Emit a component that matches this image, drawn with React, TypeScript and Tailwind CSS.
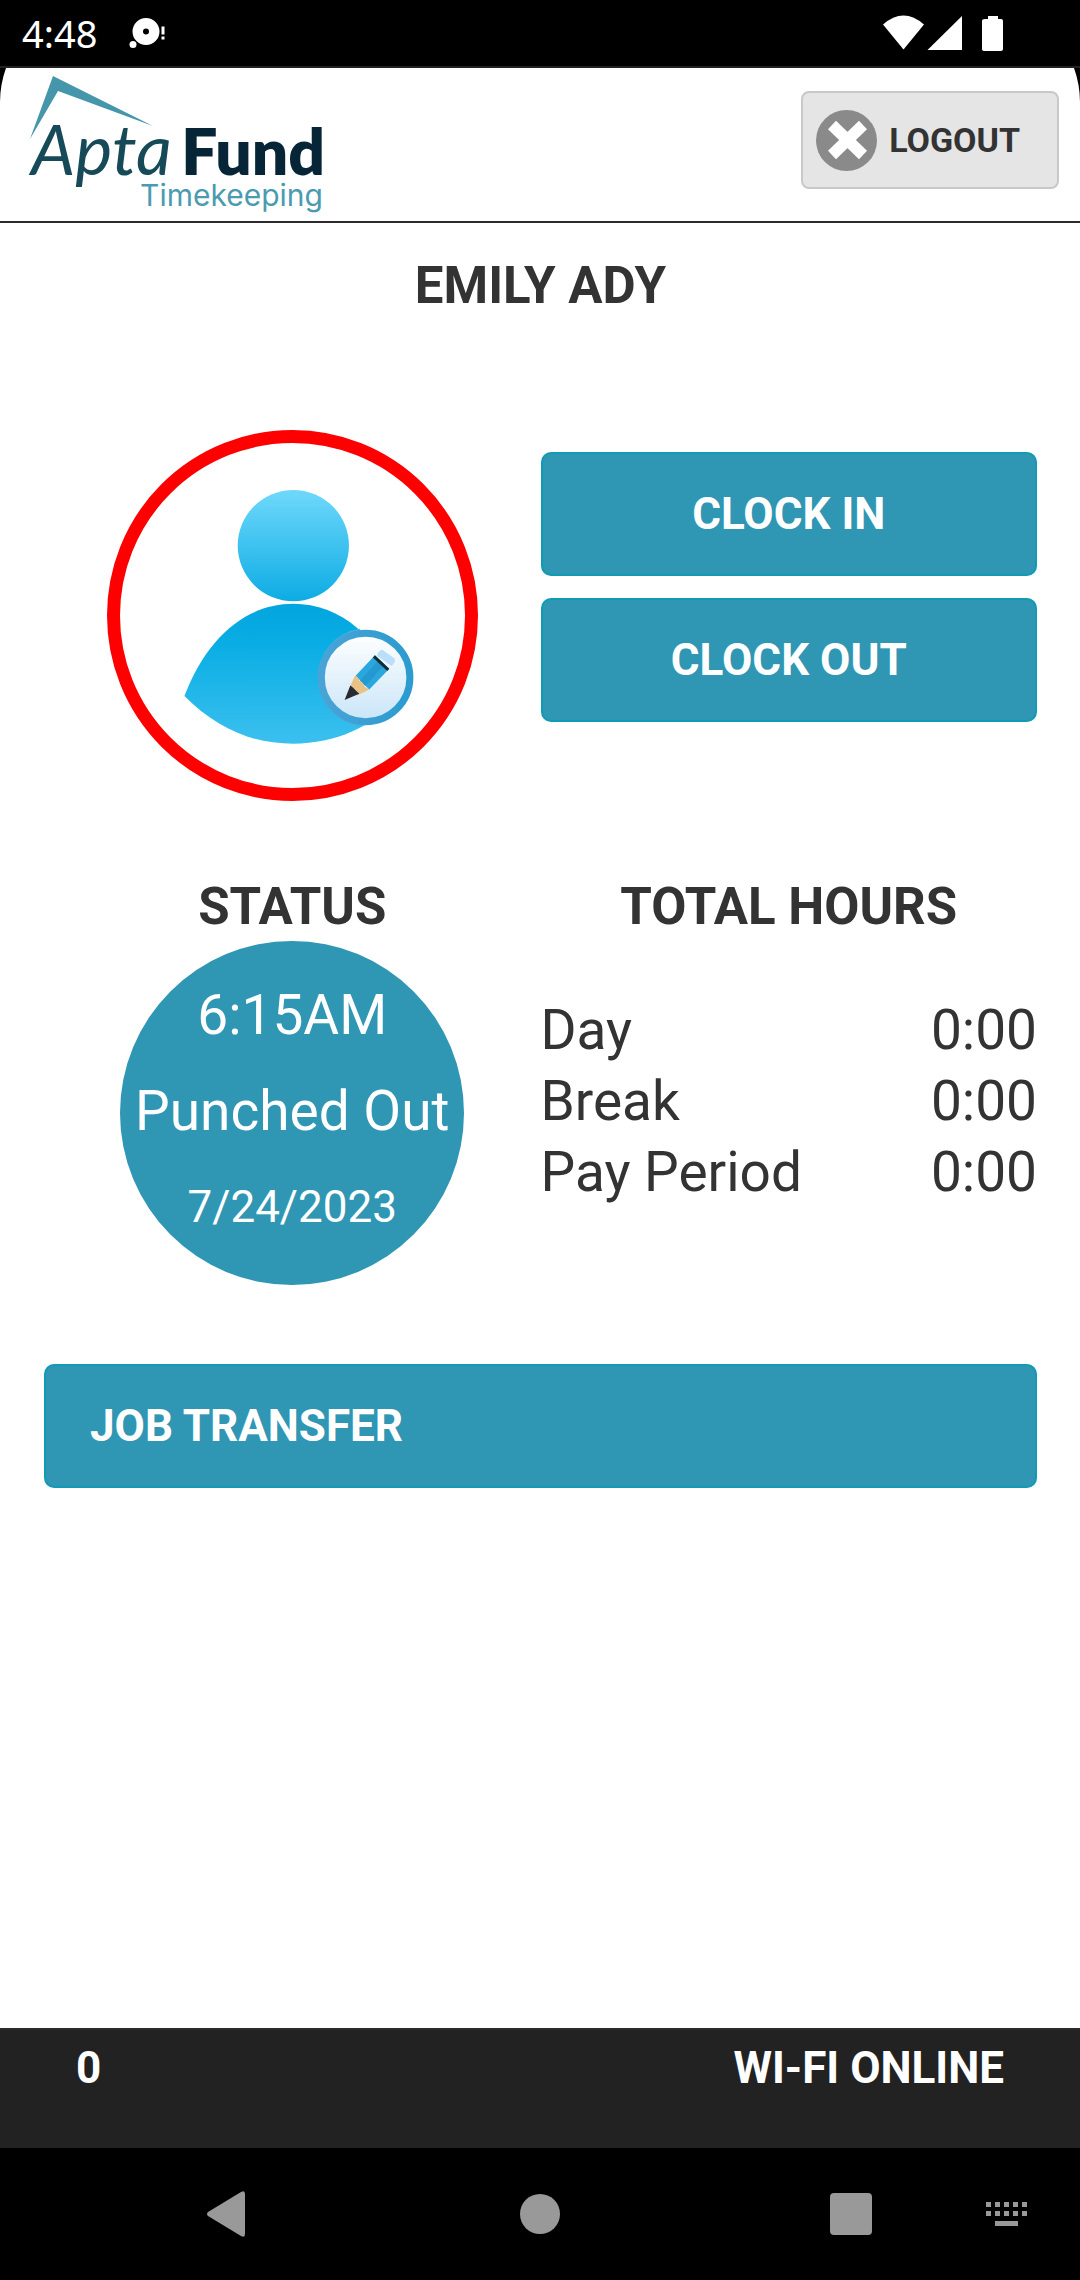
import type { ReactNode } from 'react';

// Constants
const HOURS = [
  { label: 'Day', value: '0:00' },
  { label: 'Break', value: '0:00' },
  { label: 'Pay Period', value: '0:00' },
];

const KEY_COLUMNS = [0, 9, 18, 27, 36];

const StatusBar = () => (
  <div className="flex h-[68px] items-center justify-between border-b-2 border-[#222222] bg-black pl-[22px] pr-[77px] text-white">
    <div className="flex items-center gap-8">
      <time className="font-['Noto_Sans',sans-serif] text-[38px] leading-[60px]">4:48</time>
      <svg className="h-[32px] w-[38px]" viewBox="0 0 38 32" fill="currentColor" aria-hidden="true">
        <path
          fillRule="evenodd"
          d="M17 1a13.500 13.500 0 1 0 0 27a13.500 13.500 0 1 0 0-27zM17 11.500a3 3 0 1 1 0 6a3 3 0 1 1 0-6z"
        />
        <circle cx="4" cy="27.500" r="3.500" />
        <path d="M32.500 9.500h3v8h-3zM32.500 19.500h3v3h-3z" />
      </svg>
    </div>
    <svg className="h-[38px] w-[120px]" viewBox="0 0 120 38" fill="currentColor" aria-hidden="true">
      <path d="M0 10.500Q20.500-7.500 41 10.500L20.500 35.500z" />
      <path d="M79 2V36H44.500z" />
      <path d="M105 2h10v3h3q2 0 2 2v28q0 2-2 2h-16q-3 0-3-2V7q0-2 3-2h3z" />
    </svg>
  </div>
);

const Logo = () => (
  <svg className="h-[153px] w-[330px]" viewBox="0 0 330 153" role="img" aria-label="AptaFund Timekeeping">
    <path d="M30 71L53 8L153 58L58 23z" fill="#4596aa" />
    <text x="31" y="107" fill="#174a58" className="font-['Lato',sans-serif] text-[70px] italic">
      Apta
    </text>
    <text
      x="325"
      y="107"
      textAnchor="end"
      fill="#062536"
      className="font-['Lato',sans-serif] text-[64px] font-extrabold"
    >
      Fund
    </text>
    <text x="323" y="138" textAnchor="end" fill="#4b9bb0" className="font-['Inter',sans-serif] text-[30px]">
      Timekeeping
    </text>
  </svg>
);

const Header = () => (
  <header className="relative flex items-start justify-between border-b-2 border-[#2b2b2b] pr-[21px]">
    <Logo />
    <button
      type="button"
      className="mt-[23px] flex h-[98px] items-center gap-3 rounded-lg border-2 border-[#c8c8c8] bg-[#e5e5e5] pl-[13px] pr-[37px] text-[34px] font-bold text-[#333333]"
    >
      <svg className="h-[61px] w-[61px]" viewBox="0 0 61 61" aria-hidden="true">
        <circle cx="30.500" cy="30.500" r="30.500" fill="#8a8a8a" />
        <path d="M16 15L47 45M47 15L16 45" stroke="#ffffff" strokeWidth="11.500" />
      </svg>
      LOGOUT
    </button>

    {/* Rounded display corners */}
    <svg className="absolute left-0 top-0 h-[34px] w-[6px]" viewBox="0 0 6 34" aria-hidden="true">
      <path d="M0 0H6A102 102 0 0 0 0 34z" />
    </svg>
    <svg className="absolute right-0 top-0 h-[34px] w-[6px]" viewBox="0 0 6 34" aria-hidden="true">
      <path d="M6 0H0A102 102 0 0 1 6 34z" />
    </svg>
  </header>
);

const ProfilePicture = () => (
  <button
    type="button"
    aria-label="Edit profile picture"
    className="h-[371px] w-[371px] rounded-full border-[13px] border-[#ff0000]"
  >
    <svg className="h-full w-full" viewBox="90 98 1035 1036" aria-hidden="true">
      <defs>
        <linearGradient id="head" x1="0" y1="0" x2="0" y2="1">
          <stop offset="0" stopColor="#6fd8fb" />
          <stop offset="1" stopColor="#0dace4" />
        </linearGradient>
        <linearGradient id="body" x1="0" y1="0" x2="0" y2="1">
          <stop offset="0" stopColor="#02a5df" />
          <stop offset="0.3" stopColor="#0aaee4" />
          <stop offset="1" stopColor="#3bc0ef" />
        </linearGradient>
        <linearGradient id="badge" x1="0" y1="0" x2="0" y2="1">
          <stop offset="0" stopColor="#ffffff" />
          <stop offset="1" stopColor="#c9e5f8" />
        </linearGradient>
        <linearGradient id="ring" x1="0" y1="0" x2="1" y2="0">
          <stop offset="0" stopColor="#4aa3d6" />
          <stop offset="1" stopColor="#2b9bd0" />
        </linearGradient>
      </defs>
      <circle cx="610" cy="406" r="167" fill="url(#head)" />
      <path
        d="M283 858C350 680 470 581 610 581C750 581 870 680 937 858C850 950 735 1001 610 1001C485 1001 380 955 283 858z"
        fill="url(#body)"
      />
      <path d="M810 656A148 148 0 0 0 810 949z" fill="#45b3e5" />
      <circle cx="827" cy="802" r="133" fill="url(#badge)" stroke="url(#ring)" strokeWidth="21" />
      <path d="M876 718L915 746Q917 758 905 768L861 737Q864 724 876 718z" fill="#b9dffb" />
      <path d="M855 735L898 776L838 838L797 797z" fill="#2aa7dc" />
      <path d="M868 748L884 763L826 828L810 812z" fill="#2399cf" />
      <path d="M855 735L898 776L892 783L849 742z" fill="#102c35" />
      <path d="M795 797Q805 800 808 812Q820 815 824 830L838 838L802 856L780 830z" fill="#e8c287" />
      <path d="M781 826Q790 832 796 840L808 851L764 870z" fill="#2a2a32" />
    </svg>
  </button>
);

const PrimaryButton = ({ children, align }: { children: ReactNode; align: 'left' | 'center' }) => (
  <button
    type="button"
    className={`h-[124px] w-full rounded-[10px] border-2 border-[#109ab3] bg-[#2f96b4] px-11 text-[44px] font-bold text-white ${
      align === 'left' ? 'text-left' : 'text-center'
    }`}
  >
    {children}
  </button>
);

const PunchStatus = () => (
  <section className="flex flex-col items-center gap-1">
    <h2 className="text-[51px] font-bold leading-[60px]">STATUS</h2>
    <div className="h-[344px] w-[344px] rounded-full bg-[#2f96b4] pt-[26px] text-center text-[55px] leading-[96px] text-white">
      <p>6:15AM</p>
      <p>Punched Out</p>
      <p className="text-[44px]">7/24/2023</p>
    </div>
  </section>
);

const TotalHours = () => (
  <section>
    <h2 className="text-center text-[51px] font-bold leading-[60px]">TOTAL HOURS</h2>
    <table className="mt-[58px] w-full text-[55px] leading-[71px]">
      <tbody>
        {HOURS.map(({ label, value }) => (
          <tr key={label}>
            <th scope="row" className="p-0 text-left font-normal">
              {label}
            </th>
            <td className="p-0 text-right">{value}</td>
          </tr>
        ))}
      </tbody>
    </table>
  </section>
);

const NavigationBar = () => (
  <nav className="grid h-[132px] grid-cols-[172fr_456fr_166fr_146fr] place-items-center bg-black pl-[140px] text-[#999999]">
    <button type="button" aria-label="Back">
      <svg className="h-[46px] w-[38px]" viewBox="0 0 38 46" fill="currentColor">
        <path d="M1 21L34 1Q38-1 38 3V43Q38 47 34 45L1 25Q-1 23 1 21z" />
      </svg>
    </button>
    <button type="button" aria-label="Home" className="h-10 w-10 rounded-full bg-[#999999]" />
    <button type="button" aria-label="Recent apps" className="h-[42px] w-[42px] rounded bg-[#999999]" />
    <button type="button" aria-label="Switch keyboard">
      <svg className="h-[24px] w-[42px]" viewBox="0 0 42 24" fill="currentColor">
        {KEY_COLUMNS.map((x) => (
          <path key={x} d={`M${x} 0h5v5h-5zM${x} 9h5v5h-5z`} />
        ))}
        <path d="M9 19h23v5H9z" />
      </svg>
    </button>
  </nav>
);

export default function App() {
  return (
    <div className="flex min-h-screen flex-col bg-white font-['Roboto',sans-serif] text-[#333333]">
      <StatusBar />
      <Header />
      <main className="flex-1 pl-11 pr-[43px] pt-[33px]">
        <h1 className="text-center text-[51px] font-bold leading-[60px]">EMILY ADY</h1>
        <div className="mt-[114px] grid grid-cols-2">
          <div className="flex justify-center">
            <ProfilePicture />
          </div>
          <div className="flex flex-col gap-[22px] pt-[22px]">
            <PrimaryButton align="center">CLOCK IN</PrimaryButton>
            <PrimaryButton align="center">CLOCK OUT</PrimaryButton>
          </div>
        </div>
        <div className="mb-[79px] mt-[76px] grid grid-cols-2">
          <PunchStatus />
          <TotalHours />
        </div>
        <PrimaryButton align="left">JOB TRANSFER</PrimaryButton>
      </main>
      <footer className="flex h-[120px] justify-between border-t-2 border-[#2b2b2b] bg-[#222222] px-[76px] pt-2 text-[44px] font-bold leading-[60px] text-white">
        <span>0</span>
        <span>WI-FI ONLINE</span>
      </footer>
      <NavigationBar />
    </div>
  );
}
